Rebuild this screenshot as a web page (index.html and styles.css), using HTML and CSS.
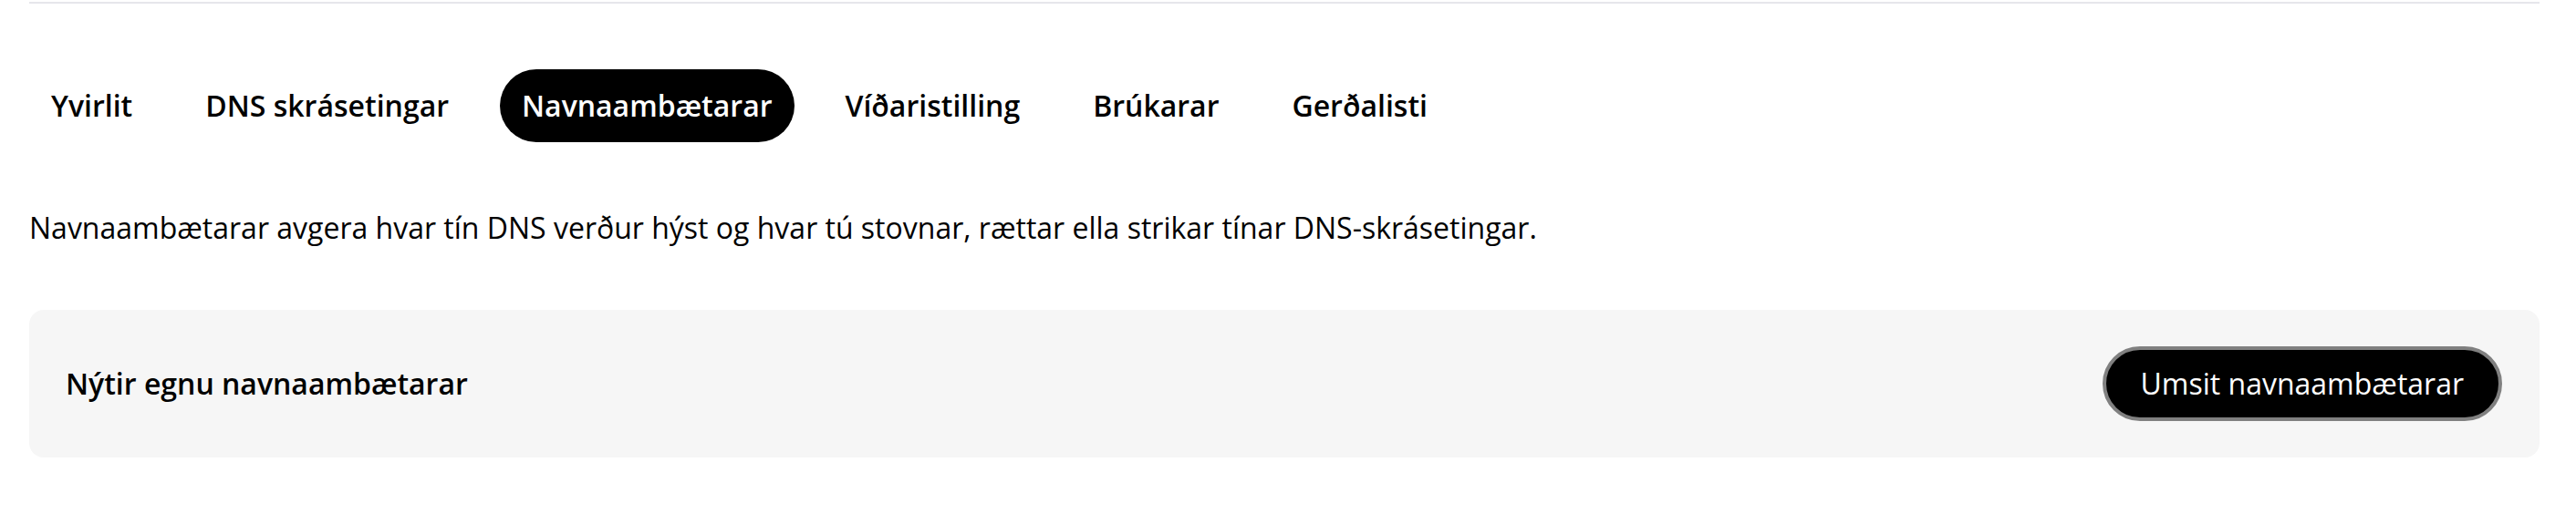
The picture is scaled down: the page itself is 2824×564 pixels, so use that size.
FILE: index.html
```html
<!DOCTYPE html>
<html lang="fo">
<head>
<meta charset="utf-8">
<title>Navnaambætarar</title>
<link rel="stylesheet" href="styles.css">
</head>
<body>
<div class="page">
  <div class="divider"></div>
  <nav class="tabs">
    <a class="tab">Yvirlit</a>
    <a class="tab">DNS skrásetingar</a>
    <a class="tab tab--active">Navnaambætarar</a>
    <a class="tab">Víðaristilling</a>
    <a class="tab">Brúkarar</a>
    <a class="tab">Gerðalisti</a>
  </nav>
  <p class="intro">Navnaambætarar avgera hvar tín DNS verður hýst og hvar tú stovnar, rættar ella strikar tínar DNS-skrásetingar.</p>
  <section class="card">
    <h2 class="card-title">Nýtir egnu navnaambætarar</h2>
    <button class="btn">Umsit navnaambætarar</button>
  </section>
</div>
</body>
</html>
```
FILE: styles.css
```css
* { box-sizing: border-box; }
html, body { margin: 0; background: #fff; }
body {
  font-family: "Open Sans", "Noto Sans", sans-serif;
  color: #000;
  font-size: 32px;
  line-height: 48px;
}
.page {
  padding: 2px 40px 0 32px;
}
.divider {
  height: 2px;
  background: #e6e6eb;
}
.tabs {
  display: flex;
  align-items: center;
  gap: 32px;
  margin-top: 72px;
}
.tab {
  display: block;
  padding: 16px 24px;
  font-weight: 600;
  border-radius: 999px;
  color: #000;
  white-space: nowrap;
}
.tab--active {
  background: #000;
  color: #fff;
}
.intro {
  margin: 70px 0 0;
  font-weight: 400;
}
.card {
  margin-top: 66px;
  background: #f6f6f6;
  border-radius: 16px;
  padding: 40px 41px 40px 40px;
  display: flex;
  align-items: center;
  justify-content: space-between;
}
.card-title {
  margin: 0;
  font-size: 32px;
  font-weight: 600;
  line-height: 48px;
}
.btn {
  font-family: inherit;
  font-size: 32px;
  line-height: 48px;
  color: #fff;
  background: #000;
  border: 4px solid #808080;
  border-radius: 999px;
  padding: 13px 38px;
  cursor: pointer;
}
```
